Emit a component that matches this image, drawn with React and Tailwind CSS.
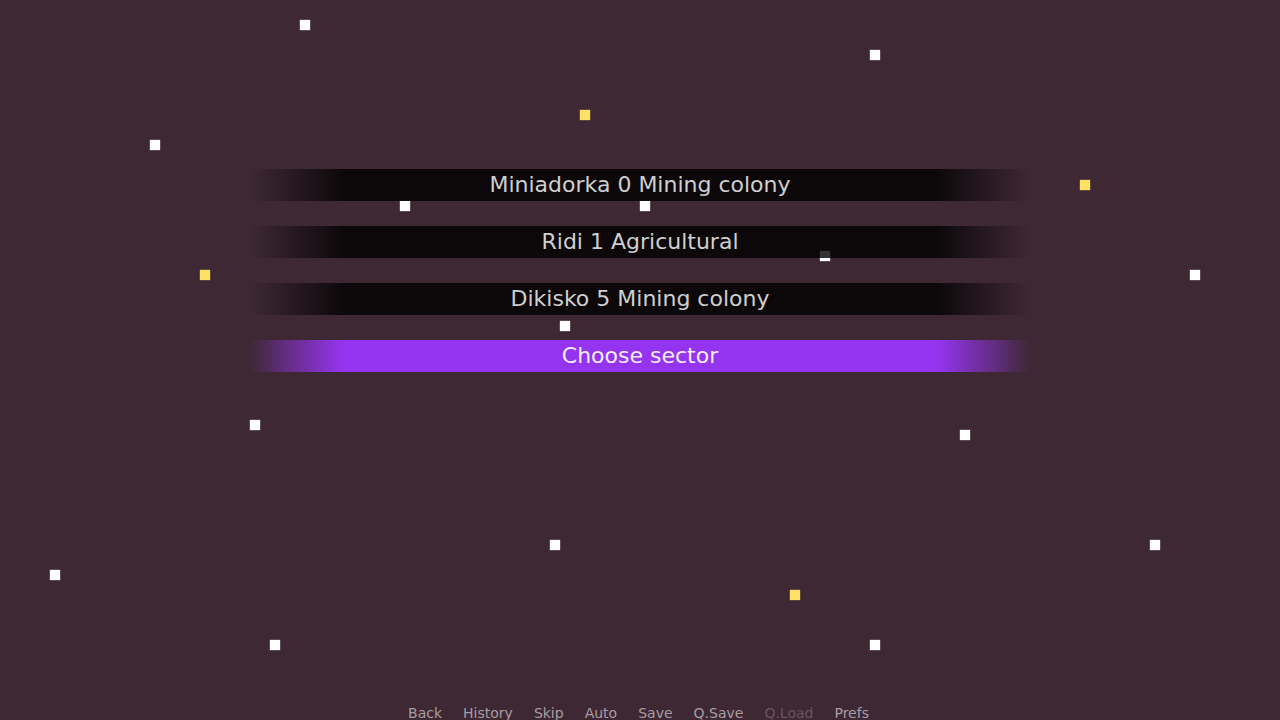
import React from "react";

const stars = [
  [305, 24, "w"],
  [875, 54, "w"],
  [585, 114, "y"],
  [155, 144, "w"],
  [1085, 184, "y"],
  [405, 205, "w"],
  [645, 205, "w"],
  [825, 255, "w"],
  [205, 274, "y"],
  [1195, 274, "w"],
  [565, 325, "w"],
  [255, 424, "w"],
  [965, 434, "w"],
  [555, 544, "w"],
  [1155, 544, "w"],
  [55, 574, "w"],
  [795, 594, "y"],
  [275, 644, "w"],
  [875, 644, "w"],
];

const choices = [
  "Miniadorka 0 Mining colony",
  "Ridi 1 Agricultural",
  "Dikisko 5 Mining colony",
];

const quickMenu = ["Back", "History", "Skip", "Auto", "Save", "Q.Save", "Q.Load", "Prefs"];

const font = { fontFamily: '"DejaVu Sans", "Liberation Sans", sans-serif' };

export default function App() {
  return (
    <div
      className="relative w-[1280px] h-[720px] overflow-hidden bg-[#3e2833] flex flex-col items-center"
      style={font}
    >
      {/* starfield */}
      {stars.map(([x, y, c], i) => (
        <div
          key={i}
          className={
            "absolute w-[10px] h-[10px] " +
            (c === "y"
              ? "bg-[#ffe066] shadow-[0_0_1px_#ffe066]"
              : "bg-white shadow-[0_0_1px_#ffffff]")
          }
          style={{ left: x - 5, top: y - 4 }}
        />
      ))}

      {/* choice menu */}
      <div className="relative z-10 mt-[169px] w-[780px] flex flex-col gap-[25px]">
        {choices.map((label) => (
          <div
            key={label}
            className="h-[32px] leading-[31px] text-center text-[22px] text-[#cfcfcf] bg-[linear-gradient(to_right,rgba(0,0,0,0)_0%,rgba(0,0,0,0.8)_12%,rgba(0,0,0,0.8)_88%,rgba(0,0,0,0)_100%)]"
          >
            {label}
          </div>
        ))}
        <div className="h-[32px] leading-[31px] text-center text-[22px] text-[#f4eefa] bg-[linear-gradient(to_right,rgba(149,52,240,0)_0%,rgba(149,52,240,0.45)_5%,rgba(149,52,240,1)_12%,rgba(149,52,240,1)_88%,rgba(149,52,240,0.45)_95%,rgba(149,52,240,0)_100%)]">
          Choose sector
        </div>
      </div>

      {/* quick menu */}
      <div className="relative z-10 mt-auto mb-[-1px] mr-[3px] flex gap-[21px] text-[14px] leading-[16px] text-[#a89ca2]">
        {quickMenu.map((item) => (
          <span key={item} className={item === "Q.Load" ? "text-[#6a5560]" : ""}>
            {item}
          </span>
        ))}
      </div>
    </div>
  );
}
